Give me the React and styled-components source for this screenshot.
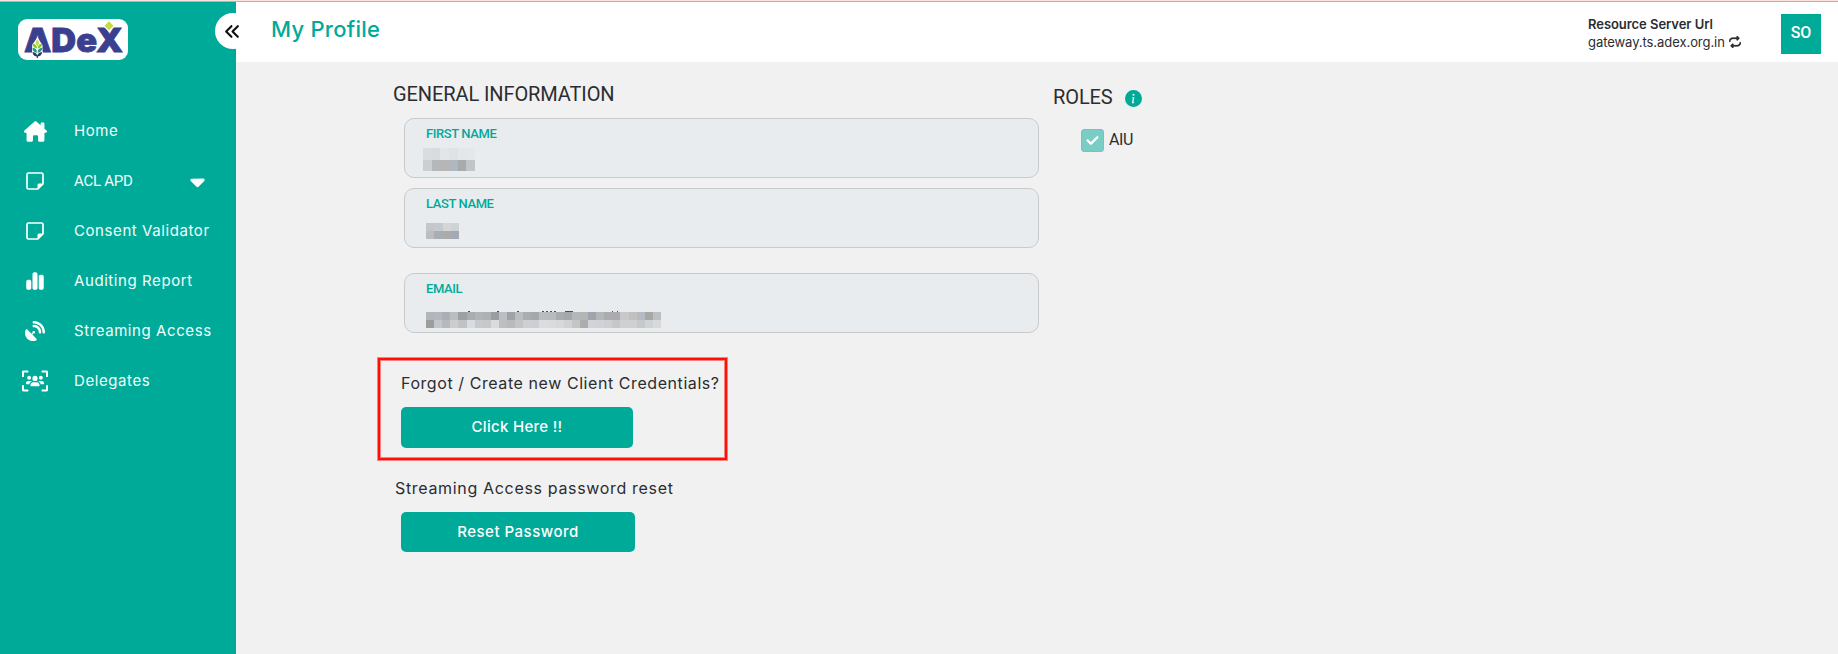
import React from "react";
import styled, { createGlobalStyle } from "styled-components";
import {
  FaHouseChimney,
  FaChartSimple,
  FaSatelliteDish,
  FaUsersViewfinder,
  FaRepeat,
  FaAnglesLeft,
  FaCaretDown,
  FaCheck,
} from "react-icons/fa6";
import { BsInfoCircleFill } from "react-icons/bs";

const TEAL = "#00aa99";
const INK = "#2b2d30";

const GlobalStyle = createGlobalStyle`
  *, *::before, *::after { box-sizing: border-box; }
  body {
    margin: 0;
    background: #f1f1f1;
    color: ${INK};
    font-family: Inter, "Liberation Sans", sans-serif;
    font-size: 16px;
  }
  button { font: inherit; border: 0; padding: 0; cursor: pointer; }
  svg { display: block; flex: none; }
`;

const Page = styled.div`
  display: flex;
  flex-direction: column;
  height: 100vh;
  overflow: hidden;
`;

const TopStrip = styled.div`
  height: 2px;
  flex: none;
  background: #fbe3dc;
  border-bottom: 1px solid #c9aea8;
`;

const Shell = styled.div`
  display: flex;
  flex: 1;
  min-height: 0;
`;

const Sidebar = styled.aside`
  position: relative;
  width: 236px;
  flex: none;
  background: ${TEAL};
  padding: 17px 0 0 18px;
`;

const LogoPlate = styled.div`
  width: 110px;
  height: 41px;
  border-radius: 9px;
  background: #fff;
`;

const CollapseButton = styled.button`
  position: absolute;
  top: 11px;
  left: 215px;
  width: 36px;
  height: 36px;
  border-radius: 50%;
  background: #fff;
  color: #111;
  display: flex;
  align-items: center;
  padding-left: 9px;
  font-size: 17px;
`;

const Menu = styled.nav`
  display: flex;
  flex-direction: column;
  margin-top: 46px;
`;

const MenuItem = styled.a`
  display: flex;
  align-items: center;
  height: 50px;
  padding-right: 20px;
  color: #fff;
`;

const MenuIcon = styled.span`
  display: flex;
  flex: none;
  justify-content: center;
  width: 34px;
  margin-right: 22px;
  font-size: ${(p) => p.$size}px;
`;

const MenuLabel = styled.span`
  flex: 1;
  color: #f0fffc;
  font-family: ${(p) => (p.$caps ? "Roboto" : "Inter")}, sans-serif;
  font-size: 15px;
  line-height: 20px;
  letter-spacing: ${(p) => (p.$caps ? "-0.25px" : "0.58px")};
  white-space: nowrap;
`;

const MenuCaret = styled.span`
  padding: 1px 7px 0 0;
  font-size: 23px;
`;

const Main = styled.main`
  flex: 1;
  min-width: 0;
`;

const Header = styled.header`
  display: flex;
  align-items: center;
  height: 60px;
  padding: 0 17px 0 35px;
  background: #fff;
`;

const Title = styled.h1`
  margin: 0 auto 6px 0;
  color: ${TEAL};
  font-size: 22px;
  line-height: 28px;
  font-weight: 500;
  letter-spacing: 0.25px;
`;

const Server = styled.div`
  width: 193px;
  padding-top: 1px;
  font-size: 13px;
  line-height: 18px;
`;

const ServerLabel = styled.div`
  font-weight: 600;
  letter-spacing: -0.05px;
`;

const ServerUrl = styled.div`
  display: flex;
  align-items: center;
  gap: 4px;
  letter-spacing: -0.06px;
  svg { stroke: currentColor; stroke-width: 10px; font-size: 12px; }
`;

const Avatar = styled.div`
  width: 40px;
  height: 40px;
  margin-top: 4px;
  background: ${TEAL};
  color: #fff;
  font: 500 16px/37px Roboto, sans-serif;
  text-align: center;
`;

const Content = styled.div`
  display: flex;
  align-items: flex-start;
  padding-left: 157px;
`;

const General = styled.section`
  width: 660px;
  padding-top: 20px;
`;

const Heading = styled.h2`
  display: flex;
  align-items: center;
  gap: 12px;
  margin: 0;
  font: 400 20px/24px Roboto, sans-serif;
  letter-spacing: -0.1px;
`;

const Fields = styled.div`
  display: flex;
  flex-direction: column;
  gap: 10px;
  width: 635px;
  margin: 12px 0 25px 11px;
`;

const Field = styled.div`
  height: 60px;
  margin-top: ${(p) => (p.$spaced ? 15 : 0)}px;
  padding: 8px 21px 0;
  border: 1px solid #c9caca;
  border-radius: 10px;
  background: #e8ecef;
`;

const FieldLabel = styled.div`
  color: ${TEAL};
  font: 500 13px/14px Roboto, sans-serif;
  letter-spacing: -0.4px;
`;

const Redacted = styled.svg`
  margin: ${(p) => p.$top}px 0 0 ${(p) => p.$left || 0}px;
`;

const Highlight = styled.section`
  width: 349px;
  height: 102px;
  margin-left: -15px;
  padding: 13px 0 0 21px;
  border: 2px solid #ff0f05;
  box-shadow: 0 0 0 1px rgba(255, 20, 10, 0.5), inset 0 0 0 1px rgba(255, 20, 10, 0.5);
`;

const Reset = styled.section`
  padding: 18px 0 0 2px;
`;

const Prompt = styled.p`
  margin: 0 0 14px;
  font-size: 16px;
  line-height: 20px;
  letter-spacing: ${(p) => p.$spacing}px;
  white-space: nowrap;
`;

const Action = styled.button`
  display: block;
  width: ${(p) => p.$width}px;
  height: ${(p) => p.$height}px;
  margin-left: ${(p) => p.$indent || 0}px;
  padding-bottom: ${(p) => p.$lift}px;
  border-radius: 5px;
  background: ${TEAL};
  color: #fff;
  font-size: 15px;
  font-weight: 500;
  letter-spacing: ${(p) => p.$spacing}px;
`;

const Roles = styled.section`
  padding-top: 22px;
`;

const RolesHeading = styled(Heading)`
  line-height: 27px;
  svg { color: ${TEAL}; margin-top: 1px; }
`;

const Role = styled.label`
  display: flex;
  align-items: center;
  gap: 5px;
  margin: 18px 0 0 28px;
  font: 16px/20px Roboto, sans-serif;
`;

const RoleName = styled.span`
  margin-top: -2px;
  letter-spacing: -0.4px;
`;

const Checkbox = styled.span`
  display: flex;
  align-items: center;
  justify-content: center;
  width: 23px;
  height: 23px;
  border: 1px solid #86b2ee;
  border-radius: 3px;
  background: #7acdc4;
  color: #fff;
  font-size: 13px;
  svg { stroke: #fff; stroke-width: 36px; }
`;

function NoteIcon() {
  return (
    <svg width="1em" height="1em" viewBox="0 0 18 18" fill="none">
      <path
        d="M11.800 17H2.500A1.500 1.500 0 0 1 1 15.500v-13A1.500 1.500 0 0 1 2.500 1h13A1.500 1.500 0 0 1 17 2.500v9.300z"
        stroke="currentColor"
        strokeWidth="1.7"
        strokeLinejoin="round"
      />
      <path d="M17 11.500h-4a1.500 1.500 0 0 0-1.500 1.500v4z" fill="currentColor" />
    </svg>
  );
}

function Logo() {
  return (
    <LogoPlate>
      <svg width="110" height="41" viewBox="0 0 110 41">
        <text
          x="6"
          y="33"
          textLength="99"
          lengthAdjust="spacingAndGlyphs"
          fontFamily="Inter, sans-serif"
          fontWeight="900"
          fontSize="33"
          fill="#3a3f8f"
          stroke="#3a3f8f"
          strokeWidth="0.8"
        >
          ADeX
        </text>
        <path d="M85.500 7.500 91 2l5.500 5.500L91 13z" fill="#fff" />
        <path d="M86.500 6.800 91 2.300l4.500 4.500L91 11.300z" fill="#c5dc3c" />
        <path d="M19.300 18.500l5.200 7.500v11l-5.200 3-5.200-3V26z" fill="#fff" />
        <path d="M19.300 20.500c2.200 2.500 2.200 4.500 0 6.500-2.200-2-2.200-4 0-6.500z" fill="#c5dc3c" />
        <path d="M14.500 24.500c3 .5 4.500 2 4.500 5-3-.2-4.500-2-4.500-5zm9.600 0c-3 .5-4.500 2-4.500 5 3-.2 4.500-2 4.500-5z" fill="#8fc640" />
        <path d="M14.500 28.800c3 .5 4.500 2 4.500 5-3-.2-4.500-2-4.500-5zm9.600 0c-3 .5-4.500 2-4.500 5 3-.2 4.500-2 4.500-5z" fill="#1a9a85" />
        <path d="M14.500 33c3 .5 4.200 1.500 4.800 3.500.6-2 1.800-3 4.800-3.500-.2 2.700-1.700 4.200-4.200 4.600V39h-1.200v-1.400c-2.500-.4-4-1.900-4.200-4.600z" fill="#2b3566" />
      </svg>
    </LogoPlate>
  );
}

function Mosaic({ rows, cell, heights, top, left, peaks = [] }) {
  const width = rows[0].length * cell;
  const pad = peaks.length ? 2 : 0;
  return (
    <Redacted
      $top={top - pad}
      $left={left}
      width={width}
      height={heights[0] + heights[1] + pad}
      shapeRendering="crispEdges"
    >
      {peaks.map(([x, w]) => (
        <rect key={x} x={x} y="1" width={w} height="1" fill="#4a4d51" />
      ))}
      {rows.map((row, r) =>
        row.map((fill, c) => (
          <rect
            key={`${r}-${c}`}
            x={c * cell}
            y={pad + (r ? heights[0] : 0)}
            width={cell}
            height={heights[r]}
            fill={`#${fill}`}
          />
        ))
      )}
    </Redacted>
  );
}

const split = (s) => s.split(" ");

const FIRST = [
  split("dbdcdf d9dbdf e2e6e8 dfe3e6 e3e7ea e4e8ed"),
  split("cdcecf b4b8ba b7b6b5 afb7c1 a9aaab c1c5ca"),
];
const LAST = [
  split("c4c6c8 c6c9cd d4d7da d0d3d6"),
  split("bcbdbf a9adb4 acabaa a3aab4"),
];
const EMAIL = [
  split("b5b5b5 b1b8c0 acafb2 b9bdc1 9d9fa3 abacae b1b4b7 adb1b5 9a9da2 bcc0c5 9fa2a6 bcbdc1 aaacb0 a4a7ab b9bdc1 b8bbbe a9abae a5a8ab b5b6b8 b5b5b5 9fa5ad b4b6b8 aaacae a9abae c8c8c9 c0c0c0 b4bbc3 a6a7a7 bcc0c6"),
  split("9d9d9c c3c7cc b6babd cccdcf bfc3c6 dadde0 c9cacd c6c8cb dbdbdc bdbfc2 b9babc c5c5c6 cdcfd3 cdced1 dadde0 d9dcdf d8d8d8 cfd1d5 c6c5c4 abaeb1 d0d3d8 d0d2d6 cdcfd3 c5c7ca d0d0d1 cfd0d2 c6c9cb d0d3d6 d9d9d9"),
];
const EMAIL_PEAKS = [[42, 2], [71, 2], [91, 2], [116, 2], [120, 2], [124, 2], [128, 2], [139, 8], [186, 1], [191, 1]];

const MENU = [
  { label: "Home", icon: <FaHouseChimney />, size: 23 },
  { label: "ACL APD", icon: <NoteIcon />, size: 18, caps: true, caret: true },
  { label: "Consent Validator", icon: <NoteIcon />, size: 18 },
  { label: "Auditing Report", icon: <FaChartSimple />, size: 20 },
  { label: "Streaming Access", icon: <FaSatelliteDish />, size: 20 },
  { label: "Delegates", icon: <FaUsersViewfinder />, size: 26 },
];

export default function App() {
  return (
    <Page>
      <GlobalStyle />
      <TopStrip />
      <Shell>
        <Sidebar>
          <Logo />
          <CollapseButton aria-label="Collapse menu">
            <FaAnglesLeft />
          </CollapseButton>
          <Menu>
            {MENU.map((m) => (
              <MenuItem key={m.label}>
                <MenuIcon $size={m.size}>{m.icon}</MenuIcon>
                <MenuLabel $caps={m.caps}>{m.label}</MenuLabel>
                {m.caret && (
                  <MenuCaret>
                    <FaCaretDown />
                  </MenuCaret>
                )}
              </MenuItem>
            ))}
          </Menu>
        </Sidebar>
        <Main>
          <Header>
            <Title>My Profile</Title>
            <Server>
              <ServerLabel>Resource Server Url</ServerLabel>
              <ServerUrl>
                gateway.ts.adex.org.in <FaRepeat />
              </ServerUrl>
            </Server>
            <Avatar>SO</Avatar>
          </Header>
          <Content>
            <General>
              <Heading>GENERAL INFORMATION</Heading>
              <Fields>
                <Field>
                  <FieldLabel>FIRST NAME</FieldLabel>
                  <Mosaic rows={FIRST} cell={8.67} heights={[12, 11]} top={7} left={-3} />
                </Field>
                <Field>
                  <FieldLabel>LAST NAME</FieldLabel>
                  <Mosaic rows={LAST} cell={8.25} heights={[8, 8]} top={12} />
                </Field>
                <Field $spaced>
                  <FieldLabel>EMAIL</FieldLabel>
                  <Mosaic rows={EMAIL} cell={8.1} heights={[8, 8]} top={16} peaks={EMAIL_PEAKS} />
                </Field>
              </Fields>
              <Highlight>
                <Prompt $spacing={0.57}>Forgot / Create new Client Credentials?</Prompt>
                <Action $width={232} $height={41} $spacing={0.3} $lift={3}>
                  Click Here !!
                </Action>
              </Highlight>
              <Reset>
                <Prompt $spacing={0.67}>Streaming Access password reset</Prompt>
                <Action $width={234} $height={40} $indent={6} $spacing={0.5} $lift={2}>
                  Reset Password
                </Action>
              </Reset>
            </General>
            <Roles>
              <RolesHeading>
                ROLES <BsInfoCircleFill size={17} />
              </RolesHeading>
              <Role>
                <Checkbox>
                  <FaCheck />
                </Checkbox>
                <RoleName>AIU</RoleName>
              </Role>
            </Roles>
          </Content>
        </Main>
      </Shell>
    </Page>
  );
}
